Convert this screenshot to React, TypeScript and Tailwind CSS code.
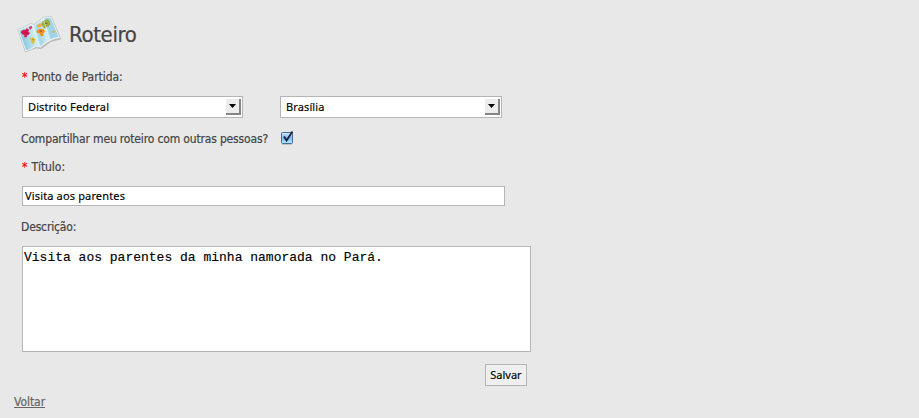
import React, { useState } from "react";

const LABEL = "font-['DejaVu_Sans_Condensed','DejaVu_Sans',sans-serif] [font-stretch:condensed] text-[12px] [-webkit-text-stroke:0.2px]";
const CONTROL = "font-['Noto_Sans',sans-serif] text-[11px] text-black [-webkit-text-stroke:0.15px]";

function MapIcon() {
  return (
    <svg width="50" height="42" viewBox="0 0 150 126" className="-ml-[3px] shrink-0" aria-hidden="true">
      <defs>
        <linearGradient id="sea" x1="0" y1="0.2" x2="1" y2="0">
          <stop offset="0" stopColor="#8ccbe2" />
          <stop offset="0.32" stopColor="#d2eef6" />
          <stop offset="0.42" stopColor="#a6d6e6" />
          <stop offset="0.6" stopColor="#d4eff7" />
          <stop offset="0.7" stopColor="#9ed3e7" />
          <stop offset="1" stopColor="#a5d8ea" />
        </linearGradient>
      </defs>
      <path d="M13 53 L34 118 L67 106 L82 108 L110 87 L141 79 L114 14 Z" fill="#888" opacity=".5" />
      <path d="M11 50 Q32 44 50 31 L60 35 Q76 24 87 13 L112 10 L139 76 Q123 77 109 84 Q95 91 80 104 L66 102 Q52 112 34 116 Z" fill="#f4f6f6" stroke="#b5bdc0" strokeWidth="2" />
      <path d="M16 53 Q34 47 50 35 L60 39 Q77 28 89 16 L110 14 L134 72 Q120 73 107 80 Q92 88 79 100 L65 98 Q51 108 36 111 Z" fill="url(#sea)" />
      <path d="M20 57 L28 50 L34 51 L38 46 L45 50 L43 56 L48 60 L43 66 L39 67 L38 73 L31 73 L31 66 L25 64 Z" fill="#dc164e" />
      <path d="M44 43 L52 38 L55 44 L48 51Z" fill="#e33a62" />
      <path d="M47 76 L58 73 L65 79 L62 88 L57 95 L51 87Z" fill="#dfc448" />
      <path d="M69 38 L75 33 L85 30 L87 37 L80 42 L70 43Z" fill="#e9ae3d" />
      <path d="M67 54 L75 48 L87 47 L94 55 L88 61 L89 68 L81 70 L76 60 L69 60Z" fill="#f09122" />
      <path d="M83 33 L86 24 L101 18 L107 24 L109 34 L102 42 L96 43 L94 49 L87 43Z" fill="#9dad47" />
      <path d="M113 57 L119 52 L124 56 L117 61Z" fill="#d5b855" />
      <path d="M57 38 L77 101 M87 15 L107 81" fill="none" stroke="#fff" strokeWidth="3" opacity=".5" />
      <path d="M32 59h8 M55 80h4 M77 54h7 M93 31h7" stroke="#573d22" strokeWidth="4" opacity=".5" />
    </svg>
  );
}

function SelectBox({ value, width }: { value: string; width: string }) {
  return (
    <button type="button" className={`${CONTROL} ${width} flex h-[22px] items-center justify-between border border-[#b5b5b5] bg-white pl-[5px] pr-px`}>
      <span className="tracking-[0.12px]">{value}</span>
      <span className="flex h-4 w-[15px] items-center justify-center border-b-2 border-r-2 border-[#858585] bg-[#ececec]">
        <svg width="7" height="4" viewBox="0 0 7 4"><path d="M0 0H7L3.500 4Z" fill="#000" /></svg>
      </span>
    </button>
  );
}

function Checkbox() {
  const [checked, setChecked] = useState(true);
  return (
    <button type="button" role="checkbox" aria-checked={checked} aria-label="Compartilhar" onClick={() => setChecked(!checked)} className="ml-[13px] h-4 w-[14px]">
      <svg width="14" height="16" viewBox="0 0 14 16">
        <defs>
          <linearGradient id="box" x1="0" y1="0" x2="0" y2="1">
            <stop offset="0" stopColor="#d5e8f8" />
            <stop offset=".5" stopColor="#7db8ea" />
            <stop offset="1" stopColor="#b9f0ff" />
          </linearGradient>
        </defs>
        <rect x=".5" y="2.500" width="11" height="11" rx="1" fill="url(#box)" stroke="#456b9c" />
        <path d="M1 14.500H11" stroke="#999" strokeWidth=".8" opacity=".6" />
        {checked && <path d="M3 6.500L5.500 10.500L11.500 1.500" fill="none" stroke="#17233a" strokeWidth="1.8" />}
      </svg>
    </button>
  );
}

function Required({ children }: { children: React.ReactNode }) {
  return <div className={`${LABEL} flex h-4 items-center text-[#444]`}><span className="mr-[4px] text-[#f00]">*</span><span className="tracking-[-0.05px]">{children}</span></div>;
}

export default function App() {
  return (
    <main className="h-[418px] w-full overflow-hidden bg-[#e8e8e8] pl-[14px] pt-[13px]">
      <header className="flex h-[42px] items-center pl-[3px]">
        <MapIcon />
        <h1 className="ml-[5px] font-['DejaVu_Sans_Condensed','DejaVu_Sans',sans-serif] text-[22px] font-normal tracking-[-0.35px] text-[#444] [-webkit-text-stroke:0.2px] [font-stretch:condensed]">Roteiro</h1>
      </header>
      <form className="flex flex-col pl-2 pt-[14px]" onSubmit={(e) => e.preventDefault()}>
        <Required>Ponto de Partida:</Required>
        <div className="mt-[11px] flex gap-[37px]">
          <SelectBox value="Distrito Federal" width="w-[221px]" />
          <SelectBox value="Brasília" width="w-[222px]" />
        </div>
        <div className={`${LABEL} mt-[12px] flex h-4 items-center text-[#444]`}>
          <span className="-ml-px w-[247px] whitespace-nowrap pt-px tracking-[-0.16px]">Compartilhar meu roteiro com outras pessoas?</span>
          <Checkbox />
        </div>
        <div className="mt-[13px]"><Required>Título:</Required></div>
        <input aria-label="Título" defaultValue="Visita aos parentes" className={`${CONTROL} mt-[11px] h-5 w-[483px] border border-[#b5b5b5] bg-white px-[2px] pb-[2px] tracking-[0.15px] outline-none`} />
        <label className={`${LABEL} -ml-px mt-[13px] h-4 leading-4 tracking-[-0.16px] text-[#444]`}>Descrição:</label>
        <textarea aria-label="Descrição" defaultValue="Visita aos parentes da minha namorada no Pará." className="mt-[11px] h-[106px] w-[509px] resize-none border border-[#b5b5b5] bg-white px-px py-[3px] font-['Liberation_Mono',monospace] text-[13px] leading-[15px] text-black outline-none [-webkit-text-stroke:0.15px]" />
        <div className="mt-3 flex w-[505px] justify-end">
          <button type="submit" className={`${CONTROL} h-[22px] w-[42px] border border-[#b5b5b5] bg-[#efefef]`}>Salvar</button>
        </div>
      </form>
      <a href="#" className={`${LABEL} mt-2 block h-4 w-fit leading-4 tracking-[-0.05px] text-[#666] underline`}>Voltar</a>
    </main>
  );
}
